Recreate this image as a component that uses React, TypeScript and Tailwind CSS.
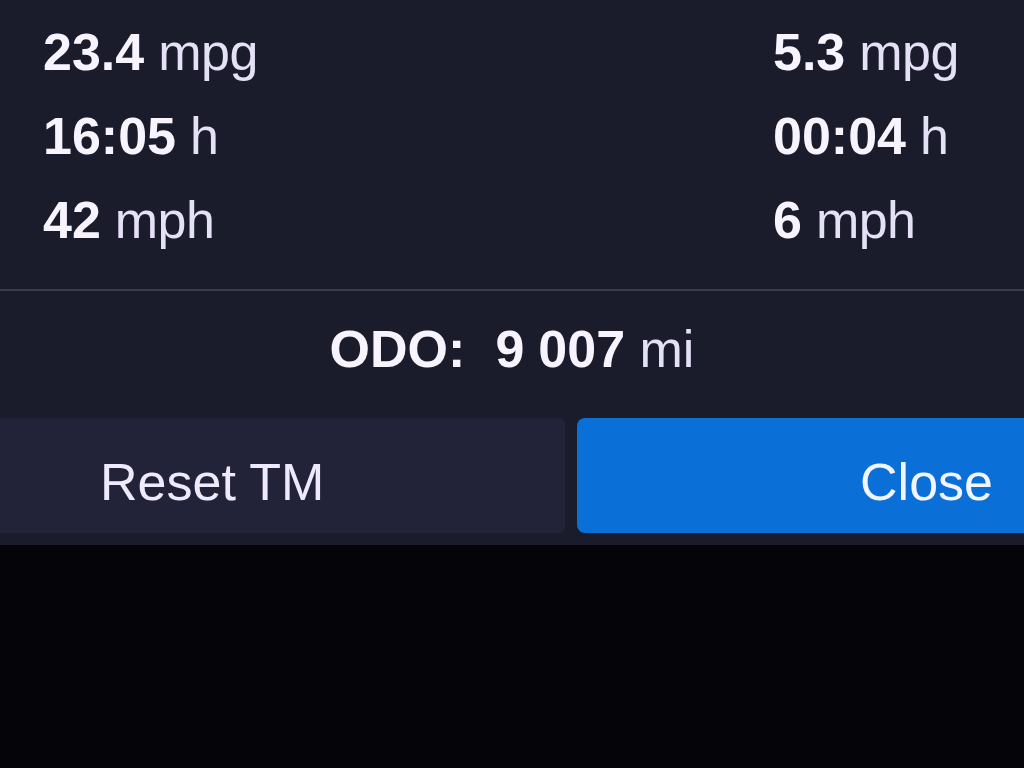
const tripStats = [
    { left: { value: '23.4', unit: 'mpg' }, right: { value: '5.3', unit: 'mpg' } },
    { left: { value: '16:05', unit: 'h' }, right: { value: '00:04', unit: 'h' } },
    { left: { value: '42', unit: 'mph' }, right: { value: '6', unit: 'mph' } },
];

function Stat({ value, unit }: { value: string; unit: string }) {
    return (
        <div className="h-[84px] leading-[84px] whitespace-nowrap">
            <span className="font-bold text-[#f7f4ff]">{value}</span>
            <span className="text-[#e4e0f6] tracking-[-0.5px]"> {unit}</span>
        </div>
    );
}

export default function App() {
    return (
        <div className="w-[1024px] h-[768px] overflow-hidden bg-[#050509] flex flex-col font-['Liberation_Sans',Arial,sans-serif] text-[52px]">
            <div className="bg-[#1a1b2b] pb-3">
                {/* Trip meter values */}
                <div className="flex pt-[10px] pl-[43px]">
                    <div className="flex-1">
                        {tripStats.map((row, i) => (
                            <Stat key={i} value={row.left.value} unit={row.left.unit} />
                        ))}
                    </div>
                    <div className="w-[251px]">
                        {tripStats.map((row, i) => (
                            <Stat key={i} value={row.right.value} unit={row.right.unit} />
                        ))}
                    </div>
                </div>

                <div className="mt-[27px] h-[2px] bg-[#3c3d4a]" />

                {/* Odometer */}
                <div className="pt-[16px] h-[84px] box-content leading-[84px] text-center whitespace-nowrap text-[#f7f4ff]">
                    <span className="font-bold">ODO:</span>
                    <span className="font-bold ml-[30px]">9<span className="ml-[14px]">007</span></span>
                    <span className="text-[#e4e0f6]"> mi</span>
                </div>

                {/* Actions */}
                <div className="mt-[27px] flex gap-3 h-[115px]">
                    <button className="w-[565px] bg-[#222339] rounded-r-md text-left pl-[100px] pt-3 text-[#eeeafc]">
                        Reset TM
                    </button>
                    <button className="flex-1 bg-[#0a6fd7] rounded-l-lg text-right pr-[31px] pt-3 text-[#f2f4ff]">
                        Close
                    </button>
                </div>
            </div>
        </div>
    );
}
